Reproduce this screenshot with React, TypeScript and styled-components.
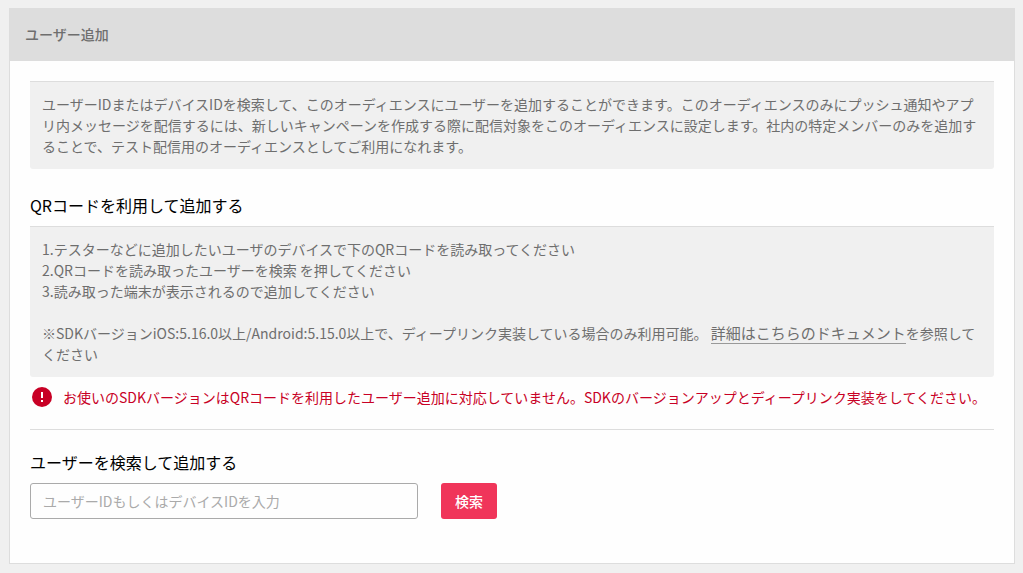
import React from "react";
import styled, { createGlobalStyle } from "styled-components";

const GlobalStyle = createGlobalStyle`
  *, *::before, *::after { box-sizing: border-box; }
  body {
    margin: 0;
    background: #f0f0f0;
    color: #6e6e6e;
    font-family: "Noto Sans CJK JP", sans-serif;
    font-size: 14px;
    line-height: 21px;
  }
  h1, h2, p, ol { margin: 0; }
`;

const Card = styled.main`
  margin: 8px 8px 9px 9px;
  background: #fefefe;
  border: 1px solid #ddd;
`;

const CardHeader = styled.header`
  padding: 15px 15px 16px;
  background: #ddd;
`;

const CardTitle = styled.h1`
  font-size: 14px;
  line-height: 21px;
  font-weight: 500;
`;

const CardBody = styled.div`
  padding: 20px 20px 44px;
`;

const Notice = styled.div`
  padding: 12px;
  background: #f0f0f0;
  border-top: 1px solid #ddd;
  border-radius: 0 0 3px 3px;
`;

const Section = styled.section<{ $divided?: boolean }>`
  margin-top: ${(p) => (p.$divided ? 22 : 24)}px;
  padding-top: ${(p) => (p.$divided ? 20 : 0)}px;
  border-top: ${(p) => (p.$divided ? "1px solid #ddd" : "0")};
`;

const SectionTitle = styled.h2`
  margin-bottom: 9px;
  color: #000;
  font-size: 16px;
  line-height: 24px;
  font-weight: 400;
`;

const Steps = styled.ol`
  margin-bottom: 21px;
  padding: 0;
  list-style: none;
`;

const DocLink = styled.a`
  display: inline-block;
  border-bottom: 1px solid #999;
  color: inherit;
  font-size: 15px;
  line-height: 20px;
  text-decoration: none;
`;

const Alert = styled.p`
  display: flex;
  align-items: flex-start;
  gap: 11px;
  margin-top: 10px;
  padding-left: 2px;
  line-height: 20px;
  color: #c80025;

  svg { flex: none; }
`;

const SearchForm = styled.form`
  display: flex;
  gap: 23px;
`;

const SearchInput = styled.input`
  width: 388px;
  height: 36px;
  padding: 0 12px;
  border: 1px solid #aaa;
  border-radius: 3px;
  background: #fefefe;
  color: #6e6e6e;
  font: inherit;

  &::placeholder { color: #aaa; opacity: 1; }
`;

const SearchButton = styled.button`
  height: 36px;
  padding: 0 14px;
  border: 0;
  border-radius: 3px;
  background: #f0355a;
  color: #fff;
  font: inherit;
  font-weight: 500;
  cursor: pointer;
`;

const AlertIcon = () => (
  <svg width="20" height="20" viewBox="0 0 20 20" aria-hidden="true">
    <circle cx="10" cy="10" r="10" fill="#c80025" />
    <path d="M9 5h2v6H9zM9 13h2v2H9z" fill="#fff" />
  </svg>
);

export default function App() {
  return (
    <>
      <GlobalStyle />
      <Card lang="ja">
        <CardHeader>
          <CardTitle>ユーザー追加</CardTitle>
        </CardHeader>
        <CardBody>
          <Notice>
            <p>
              ユーザーIDまたはデバイスIDを検索して、このオーディエンスにユーザーを追加することができます。このオーディエンスのみにプッシュ通知やアプリ内メッセージを配信するには、新しいキャンペーンを作成する際に配信対象をこのオーディエンスに設定します。社内の特定メンバーのみを追加することで、テスト配信用のオーディエンスとしてご利用になれます。
            </p>
          </Notice>

          <Section>
            <SectionTitle>QRコードを利用して追加する</SectionTitle>
            <Notice>
              <Steps>
                <li>1.テスターなどに追加したいユーザのデバイスで下のQRコードを読み取ってください</li>
                <li>2.QRコードを読み取ったユーザーを検索 を押してください</li>
                <li>3.読み取った端末が表示されるので追加してください</li>
              </Steps>
              <p>
                ※SDKバージョンiOS:5.16.0以上/Android:5.15.0以上で、ディープリンク実装している場合のみ利用可能。{" "}
                <DocLink href="#docs">詳細はこちらのドキュメント</DocLink>
                を参照してください
              </p>
            </Notice>
            <Alert role="alert">
              <AlertIcon />
              <span>
                お使いのSDKバージョンはQRコードを利用したユーザー追加に対応していません。SDKのバージョンアップとディープリンク実装をしてください。
              </span>
            </Alert>
          </Section>

          <Section $divided>
            <SectionTitle>
              <label htmlFor="user-search">ユーザーを検索して追加する</label>
            </SectionTitle>
            <SearchForm onSubmit={(e) => e.preventDefault()}>
              <SearchInput
                id="user-search"
                type="text"
                placeholder="ユーザーIDもしくはデバイスIDを入力"
              />
              <SearchButton type="submit">検索</SearchButton>
            </SearchForm>
          </Section>
        </CardBody>
      </Card>
    </>
  );
}
